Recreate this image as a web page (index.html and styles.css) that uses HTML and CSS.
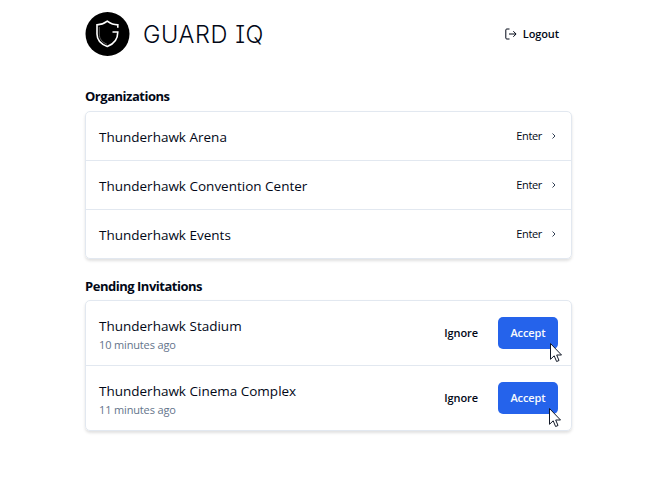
FILE: index.html
```html
<!DOCTYPE html>
<html lang="en">
<head>
    <meta charset="UTF-8">
    <meta name="viewport" content="width=device-width, initial-scale=1.0">
    <title>Guard IQ</title>
    <link rel="stylesheet" href="styles.css">
</head>
<body>
    <div class="container">
        <header class="header">
            <div class="brand">
                <svg class="logo" viewBox="0 0 44 44" fill="none">
                    <circle cx="22" cy="22" r="22" fill="#000"/>
                    <path d="M32.3 15.8V12.9C28.6 12.9 25 11.6 21.8 9.2C18.6 11.6 15.2 12.9 11.5 12.9V22C11.5 28 15 32 21.8 34.4C28.6 32 32.3 28 32.3 20H27" stroke="#fff" stroke-width="1.6"/>
                    <path d="M13.8 15V22C13.8 27 16.5 30 21.5 32.3" stroke="#999" stroke-width="0.6"/>
                </svg>
                <h1 class="brand-name">GUARD IQ</h1>
            </div>
            <button class="button logout">
                <svg class="logout-icon" viewBox="0 0 12 12" fill="none" stroke="currentColor">
                    <path d="M4.5 1H1.8Q.8 1 .8 2V10Q.8 11 1.8 11H4.5M4 6H11M8.3 3.2L11.1 6L8.3 8.8"/>
                </svg>
                <span>Logout</span>
            </button>
        </header>

        <h2 class="section-title">Organizations</h2>
        <ul class="card organizations">
            <li class="row">
                <span class="name">Thunderhawk Arena</span>
                <a class="enter"><span>Enter</span> <svg class="chevron" viewBox="0 0 6 8"><path d="M1.5 1.5L4 4L1.5 6.5"/></svg></a>
            </li>
            <li class="row">
                <span class="name">Thunderhawk Convention Center</span>
                <a class="enter"><span>Enter</span> <svg class="chevron" viewBox="0 0 6 8"><path d="M1.5 1.5L4 4L1.5 6.5"/></svg></a>
            </li>
            <li class="row">
                <span class="name">Thunderhawk Events</span>
                <a class="enter"><span>Enter</span> <svg class="chevron" viewBox="0 0 6 8"><path d="M1.5 1.5L4 4L1.5 6.5"/></svg></a>
            </li>
        </ul>

        <h2 class="section-title pending-title">Pending Invitations</h2>
        <ul class="card invitations">
            <li class="row">
                <div class="details">
                    <div class="name">Thunderhawk Stadium</div>
                    <div class="time">10 minutes ago</div>
                </div>
                <div class="actions">
                    <button class="button"><span>Ignore</span></button>
                    <button class="button accept"><span>Accept</span></button>
                </div>
                <svg class="cursor" viewBox="0 0 13 20"><path d="M.5 .5V16.3L4.2 12.8L6.6 18.5L9 17.5L6.7 12H11.5Z"/></svg>
            </li>
            <li class="row">
                <div class="details">
                    <div class="name">Thunderhawk Cinema Complex</div>
                    <div class="time">11 minutes ago</div>
                </div>
                <div class="actions">
                    <button class="button"><span>Ignore</span></button>
                    <button class="button accept"><span>Accept</span></button>
                </div>
                <svg class="cursor cursor-last" viewBox="0 0 13 20"><path d="M.5 .5V16.3L4.2 12.8L6.6 18.5L9 17.5L6.7 12H11.5Z"/></svg>
            </li>
        </ul>
    </div>
</body>
</html>
```
FILE: styles.css
```css
* {
    box-sizing: border-box;
}
body {
    margin: 0;
    background-color: #fff;
    color: #020817;
    font-family: "Open Sans", "Noto Sans", sans-serif;
    font-size: 14px;
}
.container {
    width: 487px;
    margin-left: 85px;
    padding-top: 12px;
    padding-bottom: 40px;
}
.header {
    display: flex;
    justify-content: space-between;
    align-items: center;
    height: 44px;
    margin-bottom: 31px;
}
.brand {
    display: flex;
    align-items: center;
    gap: 13px;
}
.logo {
    width: 45px;
    height: 44px;
}
.brand-name {
    margin: 0;
    padding-top: 1px;
    font-family: "Inter", sans-serif;
    font-size: 23.5px;
    font-weight: 350;
    font-feature-settings: "cv08";
    letter-spacing: 0.6px;
}
.button {
    display: flex;
    align-items: center;
    justify-content: center;
    height: 32px;
    padding: 0 12px;
    border: none;
    border-radius: 5px;
    background: none;
    color: inherit;
    font-family: inherit;
    font-size: 11px;
    font-weight: 600;
    letter-spacing: -0.1px;
    cursor: pointer;
}
.button span,
.enter span {
    padding-bottom: 2px;
}
.logout {
    gap: 6px;
    padding-right: 13px;
}
.logout-icon {
    width: 12px;
    height: 12px;
}
.section-title {
    height: 18px;
    margin: 0 0 6px;
    font-size: 13px;
    font-weight: 700;
    line-height: 18px;
    letter-spacing: -0.48px;
}
.pending-title {
    margin-bottom: 5px;
}
.card {
    margin: 0;
    padding: 0;
    list-style: none;
    border: 1px solid #e2e8f0;
    border-radius: 5px;
    box-shadow: 0 2px 3px rgba(0, 0, 0, 0.12);
}
.organizations {
    margin-bottom: 18px;
}
.row {
    display: flex;
    position: relative;
    justify-content: space-between;
    align-items: center;
    height: 49px;
    padding: 0 13px;
}
.row:first-child {
    height: 48px;
}
.row + .row {
    border-top: 1px solid #e2e8f0;
}
.name {
    font-size: 13.5px;
    line-height: 20px;
}
.organizations .name {
    padding-top: 2px;
}
.enter {
    display: flex;
    align-items: center;
    gap: 9px;
    font-size: 11px;
    letter-spacing: -0.35px;
}
.chevron {
    width: 6px;
    height: 8px;
    margin-right: 1px;
    fill: none;
    stroke: #334155;
}
.invitations .row {
    height: 65px;
}
.invitations .row:first-child {
    height: 64px;
}
.details {
    padding-top: 4px;
}
.time {
    color: #64748b;
    font-size: 11px;
    line-height: 18px;
    letter-spacing: -0.15px;
}
.actions {
    display: flex;
    gap: 8px;
}
.accept {
    width: 60px;
    background-color: #2563eb;
    color: #f8fafc;
}
/* pointer resting on the accept button */
.cursor {
    position: absolute;
    top: 42px;
    right: 8px;
    width: 13px;
    height: 20px;
    fill: #fff;
    stroke: #111827;
}
.cursor-last {
    right: 9px;
}
```
